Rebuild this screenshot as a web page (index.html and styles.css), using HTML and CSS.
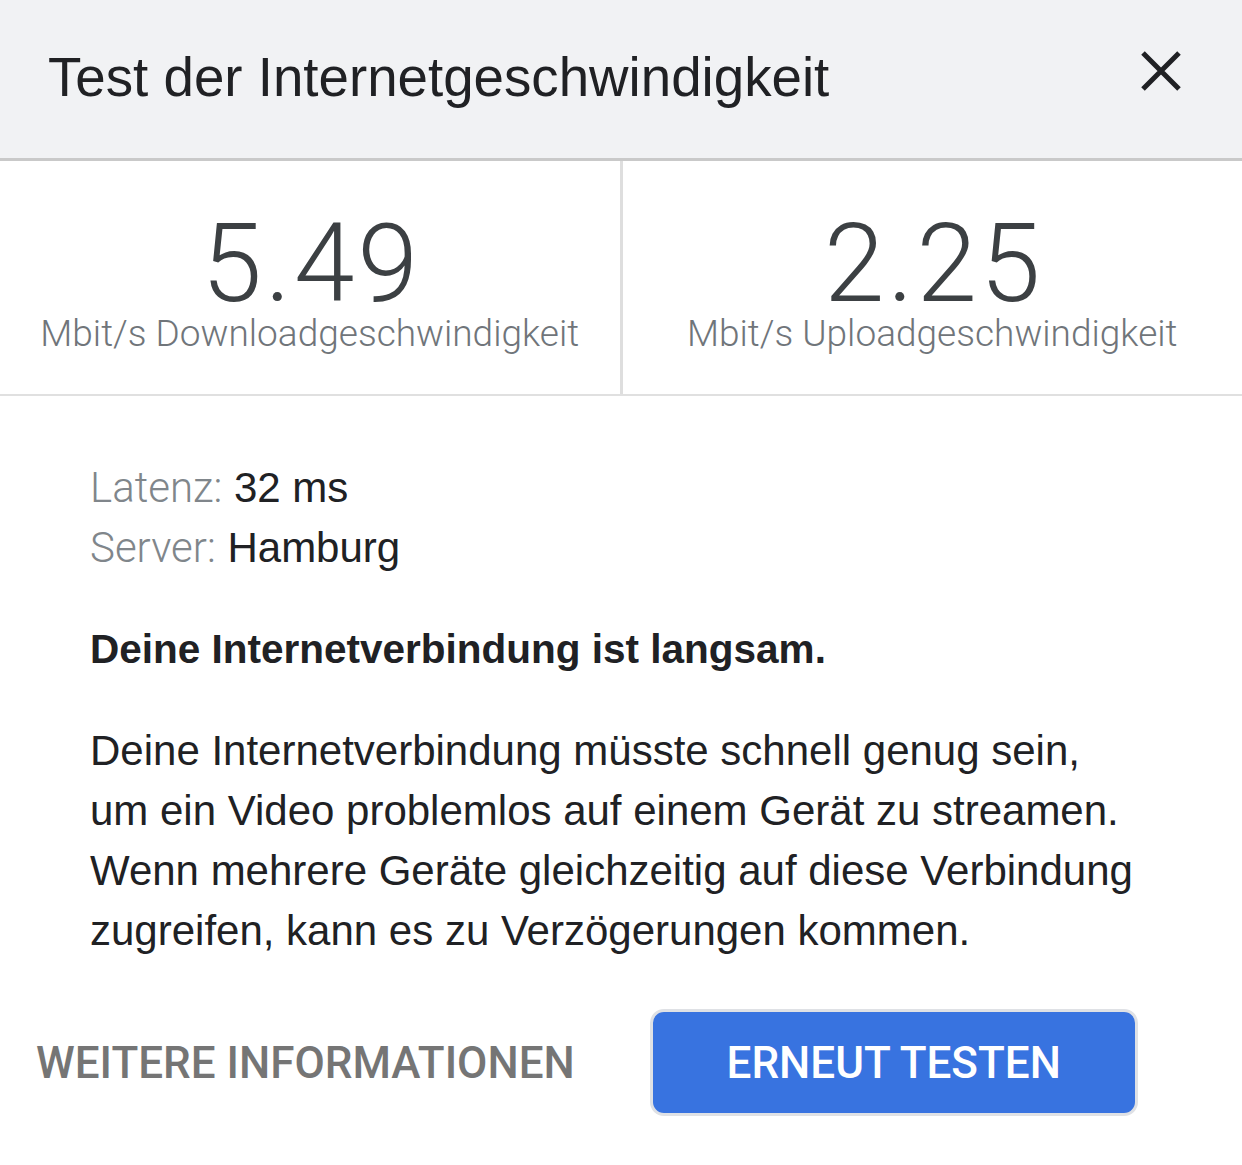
FILE: index.html
```html
<!DOCTYPE html>
<html lang="de">
<head>
<meta charset="utf-8">
<title>Test der Internetgeschwindigkeit</title>
<link rel="stylesheet" href="styles.css">
</head>
<body>
<div class="dialog">
  <header class="head">
    <h1 class="title">Test der Internetgeschwindigkeit</h1>
    <button class="close" aria-label="Schließen">
      <svg width="40" height="40" viewBox="0 0 40 40"><path d="M2 2 L38 38 M38 2 L2 38" stroke="#202124" stroke-width="5" fill="none"/></svg>
    </button>
  </header>
  <section class="stats">
    <div class="stat">
      <div class="num">5.49</div>
      <div class="unit">Mbit/s Downloadgeschwindigkeit</div>
    </div>
    <div class="stat stat-right">
      <div class="num">2.25</div>
      <div class="unit">Mbit/s Uploadgeschwindigkeit</div>
    </div>
  </section>
  <section class="content">
    <div class="meta">
      <div class="row"><span class="lbl">Latenz:</span> <span class="val">32 ms</span></div>
      <div class="row"><span class="lbl">Server:</span> <span class="val">Hamburg</span></div>
    </div>
    <p class="headline">Deine Internetverbindung ist langsam.</p>
    <p class="desc">Deine Internetverbindung müsste schnell genug sein, um ein Video problemlos auf einem Gerät zu streamen. Wenn mehrere Geräte gleichzeitig auf diese Verbindung zugreifen, kann es zu Verzögerungen kommen.</p>
  </section>
  <footer class="actions">
    <button class="link">WEITERE INFORMATIONEN</button>
    <button class="primary">ERNEUT TESTEN</button>
  </footer>
</div>
</body>
</html>
```
FILE: styles.css
```css
html, body {
  margin: 0;
  padding: 0;
  background: #ffffff;
}
body {
  font-family: "Liberation Sans", Arial, sans-serif;
  color: #202124;
}
.dialog {
  width: 1242px;
}
.head {
  height: 158px;
  box-sizing: content-box;
  background: #f1f2f4;
  border-bottom: 3px solid #c9c9c9;
  display: flex;
  align-items: center;
  justify-content: space-between;
  padding: 0 61px 0 48px;
}
.title {
  margin: 0;
  padding-bottom: 4px;
  font-size: 54.7px;
  font-weight: normal;
  line-height: 54px;
  color: #202124;
}
.close {
  border: 0;
  background: none;
  padding: 0;
  width: 40px;
  height: 40px;
  margin-bottom: 16px;
  display: block;
}
.close svg { display: block; }
.stats {
  display: flex;
  height: 233px;
  border-bottom: 2px solid #e0e0e0;
}
.stat {
  flex: 1;
  display: flex;
  flex-direction: column;
  align-items: center;
  padding-top: 53px;
}
.stat-right {
  border-left: 3px solid #dedede;
}
.num {
  font-family: Roboto, "Liberation Sans", sans-serif;
  font-weight: 300;
  font-size: 109px;
  line-height: 100px;
  letter-spacing: 3px;
  padding-left: 3px;
  color: #3c4043;
}
.unit {
  font-family: Roboto, "Liberation Sans", sans-serif;
  font-weight: 300;
  font-size: 37px;
  line-height: 38px;
  margin-top: 1px;
  color: #70757a;
}
.content {
  padding: 62px 0 0 90px;
  width: 1045px;
}
.meta .row {
  font-size: 42px;
  line-height: 60px;
}
.lbl {
  font-family: Roboto, "Liberation Sans", sans-serif;
  font-weight: 300;
  color: #80868b;
}
.val {
  color: #202124;
}
.headline {
  margin: 41px 0 0 0;
  font-size: 40.5px;
  line-height: 60px;
  font-weight: bold;
}
.desc {
  margin: 42px 0 0 0;
  font-size: 42px;
  line-height: 60px;
}
.actions {
  display: flex;
  align-items: center;
  gap: 75px;
  padding-left: 36px;
  margin-top: 48px;
}
.link, .primary {
  font-family: Roboto, "Liberation Sans", sans-serif;
  font-weight: 500;
  font-size: 44px;
  border: 0;
  background: none;
  padding: 0;
}
.link {
  color: #757575;
}
.primary {
  width: 488px;
  height: 107px;
  box-sizing: border-box;
  background: #3873e0;
  border: 3px solid #dfe1e5;
  border-radius: 14px;
  color: #ffffff;
}
```
